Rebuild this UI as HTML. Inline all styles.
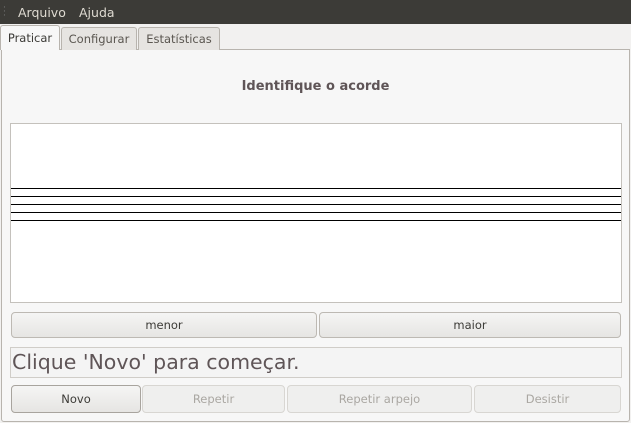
<!DOCTYPE html>
<html><head><style>
*{box-sizing:border-box;margin:0;padding:0}
body{width:631px;height:423px;background:#f2f1f0;font-family:"DejaVu Sans","Liberation Sans",sans-serif;position:relative;overflow:hidden;color:#3c3b37}
.abs{position:absolute}
.menu{left:0;top:0;width:631px;height:24px;background:#3c3b37;color:#dfdbd2;font-size:12.5px}
.menu span{position:absolute;top:5px}
.tab{position:absolute;top:27px;height:23px;border:1px solid #b8b4ae;border-bottom:none;border-radius:3px 3px 0 0;background:#e6e4e1;font-size:11.5px;color:#5a5650;text-align:center;line-height:22px}
.nb{left:1px;top:49px;width:629px;height:373px;background:#f7f7f7;border:1px solid #b8b4ae;border-radius:0 0 3px 3px}
.btn{position:absolute;border:1px solid #bdb9b3;border-radius:4px;background:linear-gradient(#f5f5f4,#e6e5e3);font-size:11.5px;text-align:center;color:#3c3b37}
.dis{color:#aaa7a2;border-color:#d8d6d2;background:#efefee}
.ln{position:absolute;left:11px;width:610px;height:1.5px;background:#000}
</style></head><body>
<div class="abs menu"><span style="left:3px;top:6px;color:#777;font-size:9px;line-height:4px">·<br>·<br>·</span><span style="left:18px">Arquivo</span><span style="left:79px">Ajuda</span></div>
<div class="abs nb"></div>
<div class="tab" style="left:0;width:60px;top:25px;height:25px;background:#f7f7f7;color:#3c3b37;line-height:25px;z-index:2">Praticar</div>
<div class="tab" style="left:61px;width:76px">Configurar</div>
<div class="tab" style="left:138px;width:82px">Estatísticas</div>
<div class="abs" style="left:0;top:79px;width:631px;text-align:center;font-weight:bold;font-size:13px;color:#5f5557">Identifique o acorde</div>
<div class="abs" style="left:10px;top:123px;width:612px;height:180px;background:#fff;border:1px solid #c4c1bc"></div>
<div class="ln" style="top:187.5px"></div>
<div class="ln" style="top:195.5px"></div>
<div class="ln" style="top:203.5px"></div>
<div class="ln" style="top:211.5px"></div>
<div class="ln" style="top:219.5px"></div>
<div class="btn" style="left:11px;top:312px;width:306px;height:26px;line-height:24px">menor</div>
<div class="btn" style="left:319px;top:312px;width:302px;height:26px;line-height:24px">maior</div>
<div class="abs" style="left:10px;top:347px;width:612px;height:31px;border:1px solid #d0cdc8;background:#f4f4f4;font-size:20.5px;color:#5f5557;padding-left:1px;line-height:29px">Clique 'Novo' para começar.</div>
<div class="btn" style="left:11px;top:385px;width:130px;height:28px;line-height:26px;border-color:#a8a49e;border-width:1.5px">Novo</div>
<div class="btn dis" style="left:142px;top:385px;width:143px;height:28px;line-height:26px">Repetir</div>
<div class="btn dis" style="left:287px;top:385px;width:185px;height:28px;line-height:26px">Repetir arpejo</div>
<div class="btn dis" style="left:474px;top:385px;width:147px;height:28px;line-height:26px">Desistir</div>
</body></html>
